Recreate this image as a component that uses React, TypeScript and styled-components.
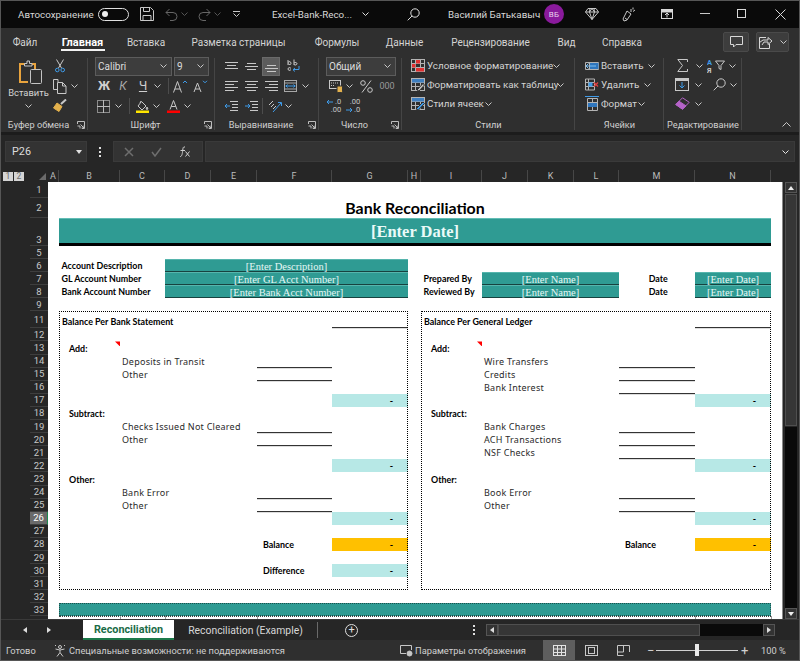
import { Fragment, type ReactNode } from 'react';
import styled, { createGlobalStyle, css } from 'styled-components';

const UI = `Roboto, 'Noto Sans', sans-serif`;
const CALIBRI = `Lato, 'Open Sans', sans-serif`;
const CAMBRIA = `'Liberation Serif', serif`;
const ITEM = `'Noto Sans', 'Open Sans', sans-serif`;

const GlobalStyle = createGlobalStyle`
  html, body { margin: 0; padding: 0; background: #262626; }
  svg { display: block; flex: none; }
`;

const Window = styled.div`
  position: relative;
  display: flex;
  flex-direction: column;
  width: 800px;
  height: 661px;
  overflow: hidden;
  background: #262626;
  color: #d4d4d4;
  font-family: ${UI};
  font-size: 11px;
  outline: 1px solid #565656;
  outline-offset: -1px;
`;

/* ---------- icons ---------- */

const Ico = ({ w = 16, h = 16, c = '#c8c8c8', children }: { w?: number; h?: number; c?: string; children: ReactNode }) => (
  <svg width={w} height={h} viewBox={`0 0 ${w} ${h}`} fill="none" stroke={c} strokeWidth="1">
    {children}
  </svg>
);

const BLUE = '#3f9be8';
const Chev = ({ c = '#c8c8c8' }: { c?: string }) => (
  <Ico w={7} h={4} c={c}><path d="M.5.5l3 3 3-3" /></Ico>
);

const SaveIcon = () => (
  <Ico w={14} h={14}><path d="M.5.5h10l3 3v10H.5zM3.5.5v4h6v-4M3 13.5v-5h8v5" /></Ico>
);
const UndoIcon = ({ flip }: { flip?: boolean }) => (
  <Ico w={13} h={13} c="#666">
    <g transform={flip ? 'matrix(-1 0 0 1 13 0)' : undefined}>
      <path d="M4.5 1 1 4.5 4.5 8M1 4.5h7a4 4 0 0 1 0 8H5" />
    </g>
  </Ico>
);
const QatIcon = () => (
  <Ico w={7} h={6}><path d="M0 .5h7M.5 2.5l3 3 3-3" /></Ico>
);
const SearchIcon = ({ c = '#c8c8c8' }: { c?: string }) => (
  <Ico w={13} h={13} c={c}><circle cx="8" cy="5" r="4.2" /><path d="M5 8 .7 12.3" /></Ico>
);
const GemIcon = () => (
  <Ico w={14} h={12}><path d="M3 .5h8l2.5 3.5L7 11.5.5 4zM.5 4h13M4.5 4 7 11.5 9.5 4M5 .5 4.5 4 7 .5 9.5 4 9 .5" /></Ico>
);
const PenIcon = () => (
  <Ico w={15} h={15}><path d="M5 4l4 3-4 6-3 1-1-2zM3 11l2 1.5M9 2v3M11 .5v2M13 3l-2 1.5" /></Ico>
);
const RibbonModeIcon = () => (
  <Ico w={12} h={10} c="#d8d8d8">
    <rect x=".5" y=".5" width="11" height="9" />
    <rect x="1" y="1" width="10" height="2" fill="#d8d8d8" />
    <path d="M6 8.5V4M4 6l2-2 2 2" />
  </Ico>
);
const CommentIcon = () => (
  <Ico w={13} h={12} c="#d8d8d8"><path d="M.5.5h12v8H6L3.5 11V8.5h-3z" /></Ico>
);
const ShareIcon = () => (
  <Ico w={14} h={14} c="#d8d8d8"><path d="M7 2.5H.5v11h10V9M.5 7.5 4 5h5V2.5l4 3.5-4 3.5V7H5l-2 3" /></Ico>
);

const PasteIcon = () => (
  <Ico w={24} h={24}>
    <path d="M6 4H1v18h8" stroke="#e8a33d" strokeWidth="2" />
    <path d="M12 4h4v5" stroke="#e8a33d" strokeWidth="2" />
    <path d="M5.500 6V3.500h2.500V1h2.500v2.500H13V6z" fill="#2f2f2f" stroke="#c8c8c8" />
    <rect x="11.500" y="9.500" width="11" height="14" rx="1" fill="#303030" stroke="#c4c4c4" />
  </Ico>
);
const ScissorsIcon = () => (
  <Ico w={10} h={14}>
    <path d="M1.5 .5 6.5 9M8.5 .5 3.5 9" />
    <circle cx="2.3" cy="11" r="1.8" stroke={BLUE} />
    <circle cx="7.7" cy="11" r="1.8" stroke={BLUE} />
  </Ico>
);
const CopyIcon = () => (
  <Ico w={14} h={15}>
    <path d="M5 3V.5H.5v10H4" />
    <path d="M4.5 3.5h5l3.500 3.500v7.500H4.500zM9.500 3.500V7H13" />
  </Ico>
);
const BrushIcon = () => (
  <Ico w={14} h={13}>
    <path d="M8 5l5-4.5" stroke="#c8c8c8" strokeWidth="2" />
    <path d="M4 4l5 3.5-3 5L.5 9z" fill="#e3b14d" stroke="#e3b14d" />
  </Ico>
);
const BordersIcon = () => (
  <Ico w={13} h={13} c="#8c8c8c">
    <rect x=".5" y=".5" width="12" height="12" />
    <path d="M6.5 0v13M0 6.5h13" stroke="#bbb" />
  </Ico>
);
const FillIcon = () => (
  <Ico w={13} h={13}>
    <path d="M5.5 1.500 10 6 6 10 2 6zM5 1 4 3" />
    <path d="M11 7c-1 1.200-1 2.500 0 2.500S12 8.200 11 7z" fill="#c8c8c8" />
    <rect x="0" y="10.500" width="13" height="2.500" fill="#ffe600" stroke="none" />
  </Ico>
);
const FontColorIcon = () => (
  <Ico w={13} h={13}>
    <path d="M3 9.500 6.500 .5l3.500 9M4.200 6.500h4.600" />
    <rect x="0" y="10.500" width="13" height="2.500" fill="#ff0000" stroke="none" />
  </Ico>
);
const FontSizeIcon = ({ down }: { down?: boolean }) => (
  <Ico w={15} h={13}>
    <path d={down ? 'M1 12 4.500 3 8 12M2.200 9h4.600' : 'M.5 12.500 4.500 1.500l4 11M2 9h5'} />
    <path d={down ? 'M10 .8l2 2 2-2' : 'M10 3l2-2 2 2'} stroke={BLUE} />
  </Ico>
);

type Lines = [number, number][];
const LinesIcon = ({ lines }: { lines: Lines }) => (
  <Ico w={13} h={11}>
    {lines.map(([y, x], i) => <path key={i} d={`M${x} ${y + 0.5}H${13 - x}`} />)}
  </Ico>
);
const EdgeLines = ({ side }: { side: 'l' | 'c' | 'r' }) => {
  const seg = (y: number, len: number) => {
    const x = side === 'l' ? 0 : side === 'r' ? 13 - len : (13 - len) / 2;
    return <path key={y} d={`M${x} ${y + 0.5}h${len}`} />;
  };
  return <Ico w={13} h={11}>{seg(0, 13)}{seg(3, 9)}{seg(6, 13)}{seg(9, 9)}</Ico>;
};
const WrapIcon = () => (
  <Ico w={13} h={14}>
    <path d="M1 6V1M1 3.500c1-1.500 3-1 3 .8S2 6 1 4.500M7 .5v5.500M7 4c1-1 3-.5 3 .7S8 6.500 7 5.500" />
    <path d="M4 9.500C3 8 1 8.500 1 10s2 2 3 .5" />
    <path d="M12 7v3.500H6.500M8 9 6 10.800 8 12.500" stroke={BLUE} />
  </Ico>
);
const MergeIcon = () => (
  <Ico w={13} h={12} c="#a8a8a8">
    <rect x=".5" y=".5" width="12" height="11" />
    <path d="M0 3h13M0 9h13" />
    <path d="M1.500 6h10M3.500 4.500 2 6l1.500 1.500M9.500 4.500 11 6 9.500 7.500" stroke={BLUE} />
  </Ico>
);
const IndentIcon = ({ inc }: { inc?: boolean }) => (
  <Ico w={13} h={11}>
    <path d="M5 .5h8M7 3.500h6M7 6.500h6M5 9.500h8" />
    <path d={inc ? 'M0 5h5M3 3l2 2-2 2' : 'M0 5h5M2 3 0 5l2 2'} stroke={BLUE} />
  </Ico>
);
const OrientIcon = () => (
  <Ico w={14} h={13}>
    <path d="M1 5 5 1M3 7l3-3M5 9l3-3" />
    <path d="M5 12 13 3M10 2.500h3.500V6" stroke={BLUE} />
  </Ico>
);
const AccountingIcon = () => (
  <Ico w={14} h={13}>
    <rect x=".5" y=".5" width="11" height="8" />
    <path d="M2 3h8M2 5.500h4" strokeDasharray="1 1" />
    <rect x="8" y="6" width="5.500" height="6.500" rx="1" fill="#e3b14d" stroke="#333" />
  </Ico>
);
const PercentIcon = () => (
  <Ico w={13} h={13}>
    <circle cx="3" cy="3" r="2.300" />
    <circle cx="10" cy="10" r="2.300" />
    <path d="M11 .5 2 12.500" />
  </Ico>
);
const DecimalText = styled.span`
  font-size: 7.5px;
  line-height: 8px;
  color: #c8c8c8;
  text-align: right;
`;
const DecimalWrap = styled.div`
  display: flex;
  flex-direction: column;
  align-items: flex-end;
  position: relative;
`;
const DecimalArrow = styled.div<{ $left?: boolean }>`
  position: absolute;
  ${p => (p.$left ? 'left: -5px; top: 1px;' : 'left: -4px; top: 9px;')}
`;
const Decimal = ({ top, bottom, left }: { top: string; bottom: string; left?: boolean }) => (
  <DecimalWrap>
    <DecimalText>{top}</DecimalText>
    <DecimalText>{bottom}</DecimalText>
    <DecimalArrow $left={left}>
      <Ico w={7} h={6} c={BLUE}><path d={left ? 'M7 3H1M3 1 1 3l2 2' : 'M0 3h6M4 1l2 2-2 2'} /></Ico>
    </DecimalArrow>
  </DecimalWrap>
);

const CellGrid = ({ children }: { children?: ReactNode }) => (
  <Ico w={14} h={13} c="#b4b4b4">
    <rect x=".5" y=".5" width="13" height="12" />
    <path d="M0 4.500h14M0 8.500h14M4.500 0v13M9.500 0v13" />
    {children}
  </Ico>
);
const CondIcon = () => (
  <CellGrid>
    <rect x="5" y="1" width="4" height="3.500" fill="#e03030" stroke="none" />
    <rect x="1" y="5" width="3.500" height="3.500" fill="#e03030" stroke="none" />
    <rect x="5" y="9" width="8" height="3.500" fill="#e03030" stroke="none" />
  </CellGrid>
);
const TableIcon = () => (
  <CellGrid>
    <rect x="1" y="1" width="12" height="3.500" fill="#3f7fc0" stroke="none" />
    <path d="M6 12 12 5.500l1.500 1.500-5.500 6z" fill="#c8c8c8" stroke="#2f2f2f" />
  </CellGrid>
);
const CellStyleIcon = () => (
  <CellGrid>
    <rect x="1" y="1" width="12" height="3.500" fill="#3f7fc0" stroke="none" />
    <path d="M5 12 12 5l1.500 1.500-6 6.500z" fill={BLUE} stroke="#2f2f2f" />
  </CellGrid>
);
const InsertCellIcon = () => (
  <Ico w={14} h={13} c="#b4b4b4">
    <path d="M.5 3.500h13v7H.5zM4.500 3.500v7M9.500 3.500v7" />
    <rect x="5" y="4" width="8.500" height="6" fill="#2f76bd" stroke="none" />
    <path d="M11 7H1M3.500 4.500 1 7l2.500 2.500" stroke="#7cc0f5" />
  </Ico>
);
const DeleteCellIcon = () => (
  <Ico w={14} h={13} c="#b4b4b4">
    <path d="M.5 1h9v11h-9zM.5 4.500h9M.5 8.500h9M3.500 1v11" />
    <rect x="3.500" y="4.500" width="4" height="4" fill="#3f9be8" stroke="none" />
    <path d="M9 4.500l4 4M13 4.500l-4 4" stroke="#e04040" strokeWidth="1.300" />
  </Ico>
);
const FormatCellIcon = () => (
  <Ico w={14} h={15} c="#b4b4b4">
    <path d="M2.500 2.500h10v12h-10zM2.500 6.500h10M2.500 10.500h10M7.500 2.500v12" />
    <rect x="3" y="7" width="9" height="4" fill="#2f76bd" stroke="none" />
    <path d="M0 .5h14" stroke={BLUE} />
  </Ico>
);
const SigmaIcon = () => (
  <Ico w={11} h={13}><path d="M10.500 3V.5H.8l4.700 6-4.700 6h9.700V10" /></Ico>
);
const SortIcon = () => (
  <svg width="20" height="15" viewBox="0 0 20 15" fill="none">
    <text x="0" y="6.500" fontSize="7.500" fontWeight="700" fill={BLUE} fontFamily={UI}>А</text>
    <text x="0" y="14.500" fontSize="7.500" fontWeight="700" fill="#c8c8c8" fontFamily={UI}>Я</text>
    <path d="M8.500 3h9l-3.500 4.500v4l-2-1v-3z" stroke="#c8c8c8" />
  </svg>
);
const FillDownIcon = () => (
  <Ico w={14} h={13}>
    <rect x=".5" y=".5" width="13" height="12" />
    <path d="M1 2h12" stroke="#c8c8c8" strokeWidth="2" />
    <path d="M7 4v6M4.500 7.500 7 10l2.500-2.500" stroke={BLUE} />
  </Ico>
);
const EraserIcon = () => (
  <Ico w={15} h={13} c="#b563c9">
    <path d="M.8 7.500 7.500.8l6.700 4.500-6.700 6.900z" />
    <path d="M.8 7.500 4 4.200l7 4.700-3.500 3.300z" fill="#b563c9" />
  </Ico>
);
const LauncherIcon = () => (
  <Ico w={8} h={8} c="#bdbdbd"><path d="M.5 3V.5h7v7H5M.5 5h2.500v2.500M3.500 3.500 7 7M7 4.500V7H4.500" /></Ico>
);
const FxIcon = () => (
  <Ico w={13} h={12} c="#d0d0d0">
    <path d="M6 1C4 .5 4 2 3.700 4.500S3 11 1 10.500M1.500 4.500H6M6.500 5.500l4 5M10.500 5.500l-4 5" />
  </Ico>
);
const AccessIcon = () => (
  <Ico w={13} h={13}>
    <circle cx="6" cy="3" r="1.500" />
    <path d="M1.500 5 6 6l4.500-1M6 6v2.500l-3 4M6 8.500l3 4M1 1l1 1M11 1l-1 1" />
  </Ico>
);
const DisplayIcon = () => (
  <Ico w={13} h={12}>
    <path d="M6 8.500H.5v-8h11V5" />
    <circle cx="9.500" cy="8.500" r="2.500" fill="#c8c8c8" />
  </Ico>
);
const NormalViewIcon = () => (
  <Ico w={13} h={11} c="#e4e4e4">
    <rect x=".5" y=".5" width="12" height="10" />
    <path d="M0 4h13M0 7.500h13M4.500 0v11M8.500 0v11" />
  </Ico>
);
const PageViewIcon = () => (
  <Ico w={13} h={11}>
    <rect x=".5" y=".5" width="12" height="10" />
    <rect x="3.500" y="2.500" width="6" height="6" />
  </Ico>
);
const BreakViewIcon = () => (
  <Ico w={13} h={11}>
    <path d="M.5 10.500V.5h12v6.500M.5 7h6V.5M.5 10.500h6" />
  </Ico>
);

/* ---------- title bar ---------- */

const TitleBar = styled.header`
  display: flex;
  align-items: center;
  flex: none;
  height: 28px;
  padding-left: 18px;
  background: #0a0a0a;
  color: #d8d8d8;
  font-size: 9.8px;
`;
const TitleItem = styled.div<{ $w: number; $mr?: number }>`
  display: flex;
  align-items: center;
  justify-content: center;
  flex: none;
  width: ${p => p.$w}px;
  margin-right: ${p => p.$mr ?? 0}px;
`;
const TitleText = styled.span<{ $w: number }>`
  flex: none;
  width: ${p => p.$w}px;
  white-space: nowrap;
`;
const Toggle = styled.div`
  display: flex;
  align-items: center;
  width: 31px;
  height: 13px;
  margin-right: 11px;
  padding-left: 3px;
  box-sizing: border-box;
  border: 1px solid #e0e0e0;
  border-radius: 7px;
`;
const ToggleKnob = styled.i`
  width: 6px;
  height: 6px;
  border-radius: 50%;
  background: #f0f0f0;
`;
const Avatar = styled.div`
  display: flex;
  align-items: center;
  justify-content: center;
  flex: none;
  width: 20px;
  height: 20px;
  margin-right: 18px;
  border-radius: 50%;
  background: #8a1a9c;
  color: #e8d4ec;
  font-size: 8px;
  letter-spacing: .3px;
`;

/* ---------- tabs ---------- */

const TabBar = styled.nav`
  display: flex;
  align-items: center;
  flex: none;
  height: 28px;
  background: #2f2f2f;
`;
const Tab = styled.div<{ $w: number; $active?: boolean }>`
  display: flex;
  flex: none;
  align-items: center;
  justify-content: center;
  position: relative;
  width: ${p => p.$w}px;
  height: 28px;
  white-space: nowrap;
  font-size: ${p => (p.$active ? 11 : 10)}px;
  font-weight: ${p => (p.$active ? 700 : 400)};
  color: ${p => (p.$active ? '#fff' : '#d4d4d4')};
  ${p => p.$active && css`
    &::after {
      content: '';
      position: absolute;
      left: 11px;
      right: 10px;
      bottom: 5px;
      height: 2px;
      background: #f2f2f2;
    }
  `}
`;
const TabActions = styled.div`
  display: flex;
  gap: 7px;
  margin-left: 66px;
`;
const TabAction = styled.div<{ $w: number }>`
  display: flex;
  align-items: center;
  justify-content: center;
  gap: 7px;
  width: ${p => p.$w}px;
  height: 20px;
  box-sizing: border-box;
  background: #3d3d3d;
  border: 1px solid #4a4a4a;
  border-radius: 2px;
`;

/* ---------- ribbon ---------- */

const Ribbon = styled.section`
  display: flex;
  flex: none;
  height: 76px;
  background: #2f2f2f;
  border-bottom: 3px solid #1c1c1c;
`;
const Group = styled.div<{ $w: number; $pl?: number }>`
  position: relative;
  display: flex;
  flex-direction: column;
  flex: none;
  width: ${p => p.$w}px;
  box-sizing: border-box;
  padding-left: ${p => p.$pl ?? 0}px;
  &::after {
    content: '';
    position: absolute;
    right: 0;
    top: 2px;
    bottom: 2px;
    width: 1px;
    background: #454545;
  }
`;
const GroupBody = styled.div<{ $step?: number }>`
  display: grid;
  grid-auto-rows: ${p => p.$step ?? 20}px;
  flex: 1;
  align-content: start;
`;
const GroupFoot = styled.div<{ $pr?: number; $ml?: number }>`
  position: relative;
  flex: none;
  height: 16px;
  margin-left: ${p => p.$ml ?? 0}px;
  padding-right: ${p => p.$pr ?? 0}px;
  text-align: center;
  font-size: 9.2px;
  line-height: 18px;
  color: #d0d0d0;
  white-space: nowrap;
`;
const Launcher = styled.span`
  position: absolute;
  right: 3px;
  top: 5px;
`;
const Row = styled.div`
  display: flex;
  align-items: center;
`;
const Btn = styled.div<{ $w: number; $ml?: number; $active?: boolean; $bold?: boolean; $it?: boolean; $u?: boolean; $small?: boolean }>`
  display: flex;
  align-items: center;
  justify-content: center;
  flex: none;
  width: ${p => p.$w}px;
  height: 19px;
  margin-left: ${p => p.$ml ?? 0}px;
  color: #d0d0d0;
  font-size: 12px;
  ${p => p.$bold && 'font-weight: 700;'}
  ${p => p.$it && 'font-style: italic; color: #a8a8a8;'}
  ${p => p.$u && 'text-decoration: underline;'}
  ${p => p.$small && 'font-size: 9px; color: #9a9a9a;'}
  ${p => p.$active && css`
    box-sizing: border-box;
    background: #5c5c5c;
    border: 1px solid #6a6a6a;
  `}
`;
const Sep = styled.i<{ $ml: number; $mr: number }>`
  flex: none;
  width: 1px;
  height: 16px;
  margin: 0 ${p => p.$mr}px 0 ${p => p.$ml}px;
  background: #4c4c4c;
`;
const Drop = styled.div<{ $w: number; $mr?: number }>`
  display: flex;
  align-items: center;
  justify-content: space-between;
  flex: none;
  width: ${p => p.$w}px;
  height: 19px;
  margin-right: ${p => p.$mr ?? 0}px;
  box-sizing: border-box;
  padding: 0 4px 0 2px;
  background: #3d3d3d;
  border: 1px solid #5c5c5c;
  color: #dcdcdc;
  font-size: 10px;
`;
const PasteButton = styled.div`
  display: flex;
  flex-direction: column;
  align-items: center;
  width: 57px;
  padding-top: 4px;
  font-size: 9.4px;
  color: #d4d4d4;
`;
const PastePic = styled.span`
  margin-left: 5px;
`;
const PasteLabel = styled.span`
  margin-top: 1px;
  line-height: 16px;
`;
const PasteChev = styled.span`
  margin-top: 3px;
`;
const ClipRow = styled.div`
  display: flex;
`;
const ClipTools = styled.div`
  display: grid;
  grid-auto-rows: 20px;
  margin-left: -6px;
`;
const StyleItem = styled.div<{ $gap?: number; $text: number }>`
  display: flex;
  align-items: center;
  white-space: nowrap;
  font-size: 9.8px;
  color: #d4d4d4;
  & > span {
    width: ${p => p.$text}px;
    margin: 0 ${p => p.$gap ?? 0}px 0 2px;
  }
`;
const RibbonRest = styled.div`
  display: flex;
  align-items: flex-end;
  justify-content: flex-end;
  flex: 1;
  padding: 0 9px 5px 0;
`;

/* ---------- formula bar ---------- */

const FormulaBar = styled.div`
  display: flex;
  align-items: center;
  flex: none;
  height: 27px;
  padding: 3px 5px 0;
  background: #262626;
`;
const FieldBox = styled.div`
  display: flex;
  align-items: center;
  height: 21px;
  box-sizing: border-box;
  background: #333;
  border: 1px solid #3a3a3a;
`;
const NameBox = styled(FieldBox)`
  justify-content: space-between;
  flex: none;
  width: 82px;
  padding: 0 4px 0 6px;
  color: #dcdcdc;
  font-size: 10.8px;
`;
const CaretDown = styled.i`
  width: 0;
  height: 0;
  border: 3.5px solid transparent;
  border-top: 4px solid #e0e0e0;
  border-bottom: 0;
`;
const Kebab = styled.div<{ $w?: number }>`
  display: flex;
  flex-direction: column;
  justify-content: center;
  align-items: center;
  gap: 2px;
  flex: none;
  width: ${p => p.$w ?? 26}px;
  & > i { width: 2px; height: 2px; background: #e0e0e0; }
`;
const FormulaButtons = styled(FieldBox)`
  flex: none;
  justify-content: space-around;
  width: 90px;
  margin-right: 2px;
  padding: 0 2px;
`;
const FormulaInput = styled(FieldBox)`
  flex: 1;
  justify-content: flex-end;
  padding-right: 5px;
`;

/* ---------- sheet ---------- */

const SheetArea = styled.div`
  display: flex;
  flex: 1;
  min-height: 0;
  padding-top: 5px;
  box-sizing: border-box;
`;

const ROWS: [string, number][] = [
  ['r1', 16], ['r2', 20], ['r3', 28], ['r5', 13],
  ['r6', 13.1], ['r7', 13.1], ['r8', 13.1], ['r9', 13.1],
  ['r11', 17], ['r12', 13.1],
  ...Array.from({ length: 21 }, (_, i): [string, number] => [`r${i + 13}`, 13.1]),
  ['r34', 13.1],
];
const ROW_NUMBERS = ROWS.map(([n]) => Number(n.slice(1))).filter(n => n !== 34);

const COLUMNS: [string, number][] = [
  ['A', 11], ['B', 61], ['C', 45], ['D', 46], ['E', 46], ['F', 75], ['G', 76], ['H', 13],
  ['I', 61], ['J', 46], ['K', 46], ['L', 45], ['M', 76], ['N', 76], ['O', 11],
];

const SheetGrid = styled.div`
  display: grid;
  flex: none;
  width: 782px;
  overflow: hidden;
  grid-template-columns: [gut] 48px ${COLUMNS.map(([n, w]) => `[${n}] ${w}px`).join(' ')} [end];
  grid-template-rows: [head] 12px ${ROWS.map(([n, h]) => `[${n}] ${h}px`).join(' ')} [rend];
  font-family: ${CALIBRI};
  color: #000;
`;

type Place = { $c: string; $to?: string; $r: string; $rto?: string };
const at = css<Place>`
  grid-column: ${p => p.$c} / ${p => p.$to ?? 'span 1'};
  grid-row: ${p => p.$r} / ${p => p.$rto ?? 'span 1'};
  min-width: 0;
`;

const Paper = styled.div<Place>`
  ${at}
  background: #fff;
`;
const OutlineButtons = styled.div`
  grid-column: gut;
  grid-row: head;
  display: flex;
  gap: 1px;
  align-self: center;
  margin: 0 0 0 3px;
`;
const OutlineButton = styled.div`
  width: 10px;
  height: 9px;
  background: #d4d4d4;
  color: #6a6a6a;
  font-family: ${UI};
  font-size: 8.5px;
  line-height: 9px;
  text-align: center;
`;
const Corner = styled.i`
  grid-column: gut;
  grid-row: head;
  justify-self: end;
  align-self: end;
  width: 7px;
  height: 7px;
  margin: 0 2px 2px 0;
  background: #6a6a6a;
  clip-path: polygon(100% 0, 100% 100%, 0 100%);
`;
const ColHead = styled.div<Place>`
  ${at}
  display: flex;
  align-items: center;
  justify-content: center;
  box-sizing: border-box;
  border-right: 1px solid #474747;
  color: #bcbcbc;
  font-family: ${UI};
  font-size: 9px;
`;
const RowHead = styled.div<Place & { $sel?: boolean; $low?: boolean }>`
  ${at}
  display: flex;
  align-items: ${p => (p.$low ? 'flex-end' : 'center')};
  justify-content: center;
  margin-left: 30px;
  box-sizing: border-box;
  border-bottom: 1px solid #3e3e3e;
  background: ${p => (p.$sel ? '#6a6a6a' : '#262626')};
  color: ${p => (p.$sel ? '#fff' : '#c8c8c8')};
  ${p => p.$sel && 'border-right: 1px solid #1e8a4c;'}
  font-family: ${UI};
  font-size: 9.5px;
  overflow: hidden;
`;
const SheetTitle = styled.div<Place>`
  ${at}
  align-self: end;
  text-align: center;
  font-size: 15.9px;
  font-weight: 700;
  line-height: 20px;
`;
const DateBanner = styled.div<Place>`
  ${at}
  display: flex;
  align-items: center;
  justify-content: center;
  box-sizing: border-box;
  padding-top: 2px;
  background: #2f9b93;
  border-top: 1px solid #62bdb5;
  border-bottom: 3px solid #000;
  color: #eafaf8;
  font-family: ${CAMBRIA};
  font-size: 16.5px;
  font-weight: 700;
`;
const Field = styled.div<Place>`
  ${at}
  display: flex;
  align-items: center;
  justify-content: center;
  box-sizing: border-box;
  padding-top: 1px;
  background: #2f9b93;
  border-top: 1px solid #56b5ad;
  border-bottom: 1px solid #17423f;
  color: #e6f7f5;
  font-family: ${CAMBRIA};
  font-size: 10.5px;
  white-space: nowrap;
`;
const Caption = styled.div<Place & { $pl?: number; $center?: boolean }>`
  ${at}
  align-self: end;
  padding-left: ${p => p.$pl ?? 2.5}px;
  ${p => p.$center && 'text-align: center;'}
  font-size: 8.9px;
  font-weight: 700;
  line-height: 12px;
  white-space: nowrap;
`;
const ItemText = styled.div<Place>`
  ${at}
  align-self: center;
  padding-left: 2px;
  color: #2a2a2a;
  font-family: ${ITEM};
  font-size: 9px;
  letter-spacing: .25px;
  line-height: 13px;
  white-space: nowrap;
`;
const Rule = styled.div<Place>`
  ${at}
  border-bottom: 1px solid #333;
  box-shadow: 0 1px 0 #ddd;
`;
const Total = styled.div<Place & { $gold?: boolean }>`
  ${at}
  display: flex;
  align-items: center;
  justify-content: flex-end;
  padding-right: 15px;
  background: ${p => (p.$gold ? '#ffc000' : '#b7e8e6')};
  font-size: 9px;
  font-weight: 700;
`;
const Frame = styled.div<Place>`
  ${at}
  box-sizing: border-box;
  border: 1px dotted #000;
`;
const CommentMark = styled.i<Place>`
  ${at}
  justify-self: end;
  width: 5px;
  height: 5px;
  background: #f00;
  clip-path: polygon(0 0, 100% 0, 100% 100%);
`;
const FooterBand = styled.div<Place>`
  ${at}
  box-sizing: border-box;
  background: #2f9b93;
  border: 1px dotted #1c4f4b;
`;
const FooterEdge = styled.div<Place>`
  ${at}
  border-top: 1px dotted #444;
`;
const Tick = styled.i<Place>`
  ${at}
  width: 1px;
  height: 4px;
  background: #999;
`;

const ScrollShell = styled.div`
  display: flex;
  flex: 1;
  margin-top: -5px;
`;
const ScrollBar = styled.div`
  display: flex;
  flex-direction: column;
  flex: 1;
  margin-top: 17px;
  padding: 0 3px 0 2px;
  border-left: 1px solid #8a8a8a;
`;
const ScrollBtn = styled.div`
  display: flex;
  align-items: center;
  justify-content: center;
  flex: none;
  height: 11px;
  background: #333;
  border: 1px solid #555;
  box-sizing: border-box;
`;
const Caret = styled.i<{ $d: 'u' | 'd' | 'l' | 'r' }>`
  width: 0;
  height: 0;
  border: 3.5px solid transparent;
  ${p => p.$d === 'u' && 'border-bottom: 4px solid #eee; border-top: 0;'}
  ${p => p.$d === 'd' && 'border-top: 4px solid #eee; border-bottom: 0;'}
  ${p => p.$d === 'l' && 'border-right: 4px solid #ddd; border-left: 0;'}
  ${p => p.$d === 'r' && 'border-left: 4px solid #ddd; border-right: 0;'}
`;
const ScrollTrack = styled.div`
  flex: 1;
  background: #0a0a0a;
  margin-top: 1px;
`;
const ScrollThumb = styled.div`
  flex: none;
  height: 232px;
  margin-top: 1px;
  box-sizing: border-box;
  background: #363636;
  border: 1px solid #4f4f4f;
`;

/* ---------- sheet tabs + status ---------- */

const SheetTabs = styled.div`
  display: flex;
  align-items: center;
  flex: none;
  height: 21px;
  background: #262626;
  border-top: 1px solid #3a3a3a;
  box-sizing: border-box;
`;
const NavArrows = styled.div`
  display: flex;
  gap: 20px;
  flex: none;
  width: 83px;
  padding-left: 23px;
  box-sizing: border-box;
`;
const ActiveSheet = styled.div`
  flex: none;
  width: 91px;
  height: 20px;
  box-sizing: border-box;
  background: #fff;
  border-bottom: 2px solid #1c7a4a;
  color: #1a6b47;
  font-size: 10.8px;
  font-weight: 700;
  line-height: 19px;
  text-align: center;
`;
const OtherSheet = styled.div`
  flex: none;
  width: 143px;
  box-sizing: border-box;
  color: #d8d8d8;
  font-size: 10.4px;
  text-align: center;
  white-space: nowrap;
`;
const TabSep = styled.i`
  flex: none;
  width: 1px;
  height: 16px;
  background: #6a6a6a;
`;
const AddSheet = styled.div`
  display: flex;
  align-items: center;
  justify-content: center;
  flex: none;
  width: 13px;
  height: 13px;
  margin: 0 115px 0 27px;
  box-sizing: border-box;
  border: 1px solid #e0e0e0;
  border-radius: 50%;
  color: #e0e0e0;
  font-size: 11px;
  line-height: 10px;
`;
const HScroll = styled.div`
  display: flex;
  align-items: center;
  flex: none;
  width: 289px;
  height: 12px;
  margin-left: 11px;
`;
const HScrollBtn = styled.div`
  display: flex;
  align-items: center;
  justify-content: center;
  flex: none;
  width: 12px;
  height: 12px;
  box-sizing: border-box;
  background: #333;
  border: 1px solid #555;
`;
const HScrollThumb = styled.div`
  flex: none;
  width: 202px;
  height: 12px;
  box-sizing: border-box;
  background: #363636;
  border: 1px solid #4f4f4f;
`;
const HScrollTrack = styled.div`
  flex: 1;
  height: 12px;
  background: #0a0a0a;
`;
const StatusBar = styled.footer`
  display: flex;
  align-items: center;
  flex: none;
  height: 21px;
  padding-left: 6px;
  background: #2f2f2f;
  color: #d0d0d0;
  font-size: 9.3px;
`;
const StatusText = styled.span<{ $w: number; $pl?: number }>`
  flex: none;
  width: ${p => p.$w}px;
  box-sizing: border-box;
  padding-left: ${p => p.$pl ?? 0}px;
  white-space: nowrap;
`;
const ViewBtn = styled.div<{ $active?: boolean }>`
  display: flex;
  align-items: center;
  justify-content: center;
  flex: none;
  width: 32px;
  height: 21px;
  background: ${p => (p.$active ? '#5e5e5e' : 'transparent')};
`;
const Zoom = styled.div`
  display: flex;
  align-items: center;
  gap: 3px;
  flex: none;
  width: 106px;
  margin: 0 8px;
`;
const ZoomSign = styled.span`
  flex: none;
  width: 6px;
  font-size: 13px;
  line-height: 12px;
  text-align: center;
`;
const ZoomTrack = styled.div`
  position: relative;
  flex: none;
  width: 82px;
  height: 1px;
  background: #d0d0d0;
`;
const ZoomKnob = styled.i`
  position: absolute;
  left: 39px;
  top: -6px;
  width: 4px;
  height: 12px;
  background: #e8e8e8;
`;

/* ---------- data ---------- */

const TABS: [string, number][] = [
  ['Файл', 50], ['Главная', 65], ['Вставка', 62], ['Разметка страницы', 123], ['Формулы', 74],
  ['Данные', 61], ['Рецензирование', 111], ['Вид', 41], ['Справка', 70],
];

type PanelDef = {
  heading: string; labelCol: string; itemCol: string; ruleCol: string; totalCol: string; toCol: string;
  add: string[]; subtract: string[]; other: string[];
};
const PANELS: PanelDef[] = [
  {
    heading: 'Balance Per Bank Statement', labelCol: 'B', itemCol: 'C', ruleCol: 'F', totalCol: 'G', toCol: 'H',
    add: ['Deposits in Transit', 'Other'],
    subtract: ['Checks Issued Not Cleared', 'Other'],
    other: ['Bank Error', 'Other'],
  },
  {
    heading: 'Balance Per General Ledger', labelCol: 'I', itemCol: 'J', ruleCol: 'M', totalCol: 'N', toCol: 'O',
    add: ['Wire Transfers', 'Credits', 'Bank Interest'],
    subtract: ['Bank Charges', 'ACH Transactions', 'NSF Checks'],
    other: ['Book Error', 'Other'],
  },
];

const Panel = ({ p }: { p: PanelDef }) => {
  const sections: [string, number, string[], number][] = [
    ['Add:', 13, p.add, 17],
    ['Subtract:', 18, p.subtract, 22],
    ['Other:', 23, p.other, 26],
  ];
  return (
    <>
      <Caption $c={p.labelCol} $to="span 4" $r="r11" $pl={3}>{p.heading}</Caption>
      <Rule $c={p.totalCol} $r="r11" />
      <CommentMark $c={p.labelCol} $r="r13" />
      {sections.map(([label, row, items, total]) => (
        <Fragment key={label}>
          <Caption $c={p.labelCol} $r={`r${row}`} $pl={10}>{label}</Caption>
          {items.map((item, i) => (
            <Fragment key={item + i}>
              <ItemText $c={p.itemCol} $to="span 3" $r={`r${row + 1 + i}`}>{item}</ItemText>
              <Rule $c={p.ruleCol} $r={`r${row + 1 + i}`} />
            </Fragment>
          ))}
          <Total $c={p.totalCol} $r={`r${total}`}>-</Total>
        </Fragment>
      ))}
      <Caption $c={p.ruleCol} $r="r28" $pl={6}>Balance</Caption>
      <Total $c={p.totalCol} $r="r28" $gold>-</Total>
      {p.totalCol === 'G' && <Caption $c={p.ruleCol} $r="r30" $pl={6}>Difference</Caption>}
      {p.totalCol === 'G' && <Total $c={p.totalCol} $r="r30">-</Total>}
      <Frame $c={p.labelCol} $to={p.toCol} $r="r11" $rto="r32" />
    </>
  );
};

const Sheet = () => (
  <SheetGrid>
    <Paper $c="A" $to="end" $r="r1" $rto="rend" />
    <OutlineButtons>
      <OutlineButton>1</OutlineButton>
      <OutlineButton>2</OutlineButton>
    </OutlineButtons>
    <Corner />
    {COLUMNS.filter(([n]) => n !== 'O').map(([n]) => (
      <ColHead key={n} $c={n} $r="head">{n}</ColHead>
    ))}
    {ROW_NUMBERS.map(n => (
      <RowHead key={n} $c="gut" $r={`r${n}`} $sel={n === 26} $low={n === 3}>{n}</RowHead>
    ))}

    <SheetTitle $c="B" $to="O" $r="r2">Bank Reconciliation</SheetTitle>
    <DateBanner $c="B" $to="O" $r="r3">[Enter Date]</DateBanner>

    <Caption $c="B" $to="D" $r="r6">Account Description</Caption>
    <Caption $c="B" $to="D" $r="r7">GL Account Number</Caption>
    <Caption $c="B" $to="D" $r="r8">Bank Account Number</Caption>
    <Field $c="D" $to="H" $r="r6">[Enter Description]</Field>
    <Field $c="D" $to="H" $r="r7">[Enter GL Acct Number]</Field>
    <Field $c="D" $to="H" $r="r8">[Enter Bank Acct Number]</Field>

    <Caption $c="I" $r="r7">Prepared By</Caption>
    <Caption $c="I" $r="r8">Reviewed By</Caption>
    <Field $c="J" $to="M" $r="r7">[Enter Name]</Field>
    <Field $c="J" $to="M" $r="r8">[Enter Name]</Field>
    <Caption $c="M" $r="r7" $center>Date</Caption>
    <Caption $c="M" $r="r8" $center>Date</Caption>
    <Field $c="N" $r="r7">[Enter Date]</Field>
    <Field $c="N" $r="r8">[Enter Date]</Field>

    {PANELS.map(p => <Panel key={p.heading} p={p} />)}

    <FooterBand $c="B" $to="O" $r="r33" />
    <FooterEdge $c="B" $to="O" $r="r34" />
    {['C', 'D', 'F', 'M', 'N', 'O'].map(c => <Tick key={c} $c={c} $r="r34" />)}
  </SheetGrid>
);

export default function App() {
  return (
    <>
      <GlobalStyle />
      <Window>
        <TitleBar>
          <TitleText $w={80}>Автосохранение</TitleText>
          <Toggle><ToggleKnob /></Toggle>
          <TitleItem $w={14} $mr={10}><SaveIcon /></TitleItem>
          <TitleItem $w={14} $mr={3}><UndoIcon /></TitleItem>
          <TitleItem $w={7} $mr={9}><Chev c="#555" /></TitleItem>
          <TitleItem $w={14} $mr={3}><UndoIcon flip /></TitleItem>
          <TitleItem $w={7} $mr={12}><Chev c="#555" /></TitleItem>
          <TitleItem $w={7} $mr={32}><QatIcon /></TitleItem>
          <TitleText $w={89}>Excel-Bank-Reco...</TitleText>
          <TitleItem $w={8} $mr={38}><Chev c="#e0e0e0" /></TitleItem>
          <TitleItem $w={13} $mr={28}><SearchIcon c="#e0e0e0" /></TitleItem>
          <TitleText $w={96}>Василий Батькавыч</TitleText>
          <Avatar>ВБ</Avatar>
          <TitleItem $w={20} $mr={17}><GemIcon /></TitleItem>
          <TitleItem $w={20} $mr={21}><PenIcon /></TitleItem>
          <TitleItem $w={14} $mr={25}><RibbonModeIcon /></TitleItem>
          <TitleItem $w={12} $mr={25}><Ico w={10} h={2}><path d="M0 .5h10" /></Ico></TitleItem>
          <TitleItem $w={12} $mr={26}><Ico w={10} h={10} c="#d8d8d8"><rect x=".5" y=".5" width="8" height="8" /></Ico></TitleItem>
          <TitleItem $w={12}><Ico w={11} h={11} c="#d8d8d8"><path d="M.5.5l10 10M10.500.5l-10 10" /></Ico></TitleItem>
        </TitleBar>

        <TabBar>
          {TABS.map(([name, w]) => (
            <Tab key={name} $w={w} $active={name === 'Главная'}>{name}</Tab>
          ))}
          <TabActions>
            <TabAction $w={26}><CommentIcon /></TabAction>
            <TabAction $w={33}><ShareIcon /><Chev /></TabAction>
          </TabActions>
        </TabBar>

        <Ribbon>
          <Group $w={88}>
            <GroupBody>
              <ClipRow>
                <PasteButton>
                  <PastePic><PasteIcon /></PastePic>
                  <PasteLabel>Вставить</PasteLabel>
                  <PasteChev><Chev /></PasteChev>
                </PasteButton>
                <ClipTools>
                  <Btn $w={18}><ScissorsIcon /></Btn>
                  <Row>
                    <Btn $w={18}><CopyIcon /></Btn>
                    <Btn $w={10}><Chev /></Btn>
                  </Row>
                  <Btn $w={18}><BrushIcon /></Btn>
                </ClipTools>
              </ClipRow>
            </GroupBody>
            <GroupFoot $pr={11}>Буфер обмена<Launcher><LauncherIcon /></Launcher></GroupFoot>
          </Group>

          <Group $w={127} $pl={7}>
            <GroupBody>
              <Row>
                <Drop $w={77} $mr={2}>Calibri<Chev /></Drop>
                <Drop $w={35}>9<Chev /></Drop>
              </Row>
              <Row>
                <Btn $w={18} $bold>Ж</Btn>
                <Btn $w={20} $it>К</Btn>
                <Btn $w={20} $u>Ч</Btn>
                <Btn $w={9}><Chev /></Btn>
                <Sep $ml={6} $mr={1} />
                <Btn $w={20}><FontSizeIcon /></Btn>
                <Btn $w={20}><FontSizeIcon down /></Btn>
              </Row>
              <Row>
                <Btn $w={16}><BordersIcon /></Btn>
                <Btn $w={14}><Chev /></Btn>
                <Sep $ml={4} $mr={4} />
                <Btn $w={16}><FillIcon /></Btn>
                <Btn $w={12}><Chev /></Btn>
                <Btn $w={16} $ml={3}><FontColorIcon /></Btn>
                <Btn $w={12}><Chev /></Btn>
              </Row>
            </GroupBody>
            <GroupFoot $pr={19}>Шрифт<Launcher><LauncherIcon /></Launcher></GroupFoot>
          </Group>

          <Group $w={104} $pl={6}>
            <GroupBody>
              <Row>
                <Btn $w={20}><LinesIcon lines={[[1, 0], [4, 2], [7, 0]]} /></Btn>
                <Btn $w={20}><LinesIcon lines={[[2, 2], [5, 0], [8, 2]]} /></Btn>
                <Btn $w={18} $ml={1} $active><LinesIcon lines={[[4, 2], [7, 0], [10, 2]]} /></Btn>
                <Btn $w={20} $ml={3}><WrapIcon /></Btn>
              </Row>
              <Row>
                <Btn $w={20}><EdgeLines side="l" /></Btn>
                <Btn $w={20}><EdgeLines side="c" /></Btn>
                <Btn $w={20}><EdgeLines side="r" /></Btn>
                <Btn $w={19}><MergeIcon /></Btn>
                <Btn $w={11}><Chev /></Btn>
              </Row>
              <Row>
                <Btn $w={20}><IndentIcon /></Btn>
                <Btn $w={20}><IndentIcon inc /></Btn>
                <Sep $ml={1} $mr={5} />
                <Btn $w={14}><OrientIcon /></Btn>
                <Btn $w={12}><Chev /></Btn>
              </Row>
            </GroupBody>
            <GroupFoot $pr={18}>Выравнивание<Launcher><LauncherIcon /></Launcher></GroupFoot>
          </Group>

          <Group $w={83} $pl={7}>
            <GroupBody>
              <Row><Drop $w={70}>Общий<Chev /></Drop></Row>
              <Row>
                <Btn $w={20}><AccountingIcon /></Btn>
                <Btn $w={7}><Chev /></Btn>
                <Btn $w={27}><PercentIcon /></Btn>
                <Btn $w={14} $small>000</Btn>
              </Row>
              <Row>
                <Btn $w={20}><Decimal top=".0" bottom=".00" left /></Btn>
                <Btn $w={18}><Decimal top=".00" bottom=".0" /></Btn>
              </Row>
            </GroupBody>
            <GroupFoot $pr={19}>Число<Launcher><LauncherIcon /></Launcher></GroupFoot>
          </Group>

          <Group $w={173} $pl={9}>
            <GroupBody $step={19}>
              <StyleItem $text={126}><CondIcon /><span>Условное форматирование</span><Chev /></StyleItem>
              <StyleItem $text={130}><TableIcon /><span>Форматировать как таблицу</span><Chev /></StyleItem>
              <StyleItem $text={58}><CellStyleIcon /><span>Стили ячеек</span><Chev /></StyleItem>
            </GroupBody>
            <GroupFoot $ml={-9}>Стили</GroupFoot>
          </Group>

          <Group $w={89} $pl={10}>
            <GroupBody $step={19}>
              <StyleItem $text={40} $gap={7}><InsertCellIcon /><span>Вставить</span><Chev /></StyleItem>
              <StyleItem $text={37} $gap={6}><DeleteCellIcon /><span>Удалить</span><Chev /></StyleItem>
              <StyleItem $text={37} $gap={0}><FormatCellIcon /><span>Формат</span><Chev /></StyleItem>
            </GroupBody>
            <GroupFoot $ml={-10}>Ячейки</GroupFoot>
          </Group>

          <Group $w={78} $pl={8}>
            <GroupBody $step={19}>
              <Row>
                <Btn $w={20}><SigmaIcon /></Btn>
                <Btn $w={14}><Chev /></Btn>
                <Btn $w={20} $ml={1}><SortIcon /></Btn>
                <Btn $w={10}><Chev /></Btn>
              </Row>
              <Row>
                <Btn $w={20}><FillDownIcon /></Btn>
                <Btn $w={12}><Chev /></Btn>
                <Btn $w={20} $ml={5}><SearchIcon /></Btn>
                <Btn $w={8}><Chev /></Btn>
              </Row>
              <Row>
                <Btn $w={20}><EraserIcon /></Btn>
                <Btn $w={12}><Chev /></Btn>
              </Row>
            </GroupBody>
            <GroupFoot $ml={-8}>Редактирование</GroupFoot>
          </Group>

          <RibbonRest><Ico w={9} h={5}><path d="M.5 4.500l4-4 4 4" /></Ico></RibbonRest>
        </Ribbon>

        <FormulaBar>
          <NameBox>P26<CaretDown /></NameBox>
          <Kebab><i /><i /><i /></Kebab>
          <FormulaButtons>
            <Ico w={10} h={10} c="#6e6e6e"><path d="M1 1l8 8M9 1 1 9" strokeWidth="1.500" /></Ico>
            <Ico w={11} h={10} c="#6e6e6e"><path d="M1 5l3 4 6-8" strokeWidth="1.500" /></Ico>
            <FxIcon />
          </FormulaButtons>
          <FormulaInput><Chev c="#e8e8e8" /></FormulaInput>
        </FormulaBar>

        <SheetArea>
          <Sheet />
          <ScrollShell>
            <ScrollBar>
              <ScrollBtn><Caret $d="u" /></ScrollBtn>
              <ScrollThumb />
              <ScrollTrack />
              <ScrollBtn><Caret $d="d" /></ScrollBtn>
            </ScrollBar>
          </ScrollShell>
        </SheetArea>

        <SheetTabs>
          <NavArrows><Caret $d="l" /><Caret $d="r" /></NavArrows>
          <ActiveSheet>Reconciliation</ActiveSheet>
          <OtherSheet>Reconciliation (Example)</OtherSheet>
          <TabSep />
          <AddSheet>+</AddSheet>
          <Kebab $w={2}><i /><i /><i /></Kebab>
          <HScroll>
            <HScrollBtn><Caret $d="l" /></HScrollBtn>
            <HScrollThumb />
            <HScrollTrack />
            <HScrollBtn><Caret $d="r" /></HScrollBtn>
          </HScroll>
        </SheetTabs>

        <StatusBar>
          <StatusText $w={48}>Готово</StatusText>
          <TitleItem $w={13}><AccessIcon /></TitleItem>
          <StatusText $w={333} $pl={2}>Специальные возможности: не поддерживаются</StatusText>
          <TitleItem $w={13}><DisplayIcon /></TitleItem>
          <StatusText $w={130} $pl={2}>Параметры отображения</StatusText>
          <ViewBtn $active><NormalViewIcon /></ViewBtn>
          <ViewBtn><PageViewIcon /></ViewBtn>
          <ViewBtn><BreakViewIcon /></ViewBtn>
          <Zoom>
            <ZoomSign>−</ZoomSign>
            <ZoomTrack><ZoomKnob /></ZoomTrack>
            <ZoomSign>+</ZoomSign>
          </Zoom>
          <StatusText $w={26}>100 %</StatusText>
        </StatusBar>
      </Window>
    </>
  );
}
